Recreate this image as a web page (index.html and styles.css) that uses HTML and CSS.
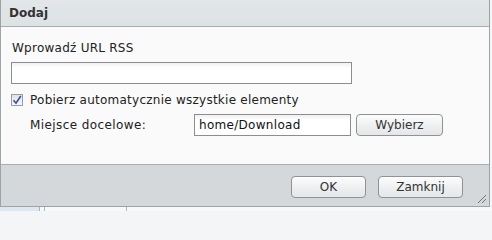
FILE: index.html
```html
<!DOCTYPE html>
<html lang="pl">
<head>
<meta charset="utf-8">
<title>Dodaj</title>
<link rel="stylesheet" href="styles.css">
</head>
<body>
<div class="dialog">
  <div class="titlebar">Dodaj</div>
  <div class="content">
    <div class="label">Wprowadź URL RSS</div>
    <div class="field url-field"></div>
    <div class="check-row">
      <span class="checkbox">
        <svg width="10" height="10" viewBox="0 0 10 10"><path d="M1.5 5.2 L4 8.2 L8.8 1" fill="none" stroke="#3c4f9c" stroke-width="1.6"/></svg>
      </span>
      <span class="check-label">Pobierz automatycznie wszystkie elementy</span>
    </div>
    <div class="dest-row">
      <span class="dest-label">Miejsce docelowe:</span>
      <div class="field dest-field">home/Download</div>
      <div class="btn btn-choose">Wybierz</div>
    </div>
  </div>
  <div class="footer">
    <div class="btn btn-ok">OK</div>
    <div class="btn btn-close">Zamknij</div>
    <svg class="grip" width="10" height="10" viewBox="0 0 10 10">
      <path d="M1 9 L9 1 M5 9 L9 5" stroke="#6f7478" stroke-width="1"/>
    </svg>
  </div>
</div>
<div class="behind">
  <div class="b-side"></div>
  <div class="b-col1"></div>
  <div class="b-col2"></div>
</div>
</body>
</html>
```
FILE: styles.css
```css
html {
  height: 211px;
  overflow: hidden;
}
html, body {
  margin: 0;
  padding: 0;
  background: #f3f5f7;
}
body {
  width: 492px;
  height: 211px;
  overflow: hidden;
  font-family: "DejaVu Sans", Verdana, sans-serif;
  font-size: 12px;
  color: #222;
}
.dialog {
  width: 490px;
  box-sizing: border-box;
  border: 1px solid #9ea3a7;
  border-top: none;
  position: relative;
}
.titlebar {
  height: 26px;
  line-height: 26px;
  padding-left: 8px;
  font-weight: bold;
  font-size: 12px;
  color: #333;
  background: linear-gradient(#e2e6e9, #dde2e5);
  border-bottom: 1px solid #a9adb0;
}
.content {
  box-sizing: border-box;
  height: 138px;
  padding: 14px 10px 0 10px;
  background: #fafafa;
  border-bottom: 1px solid #a9adb0;
}
.label {
  line-height: 14px;
  padding-left: 1px;
  letter-spacing: 0.25px;
}
.field {
  box-sizing: border-box;
  height: 22px;
  border: 1px solid #8d8d8d;
  background: linear-gradient(#f0f0f0, #ffffff 5px, #ffffff);
  line-height: 20px;
  padding-left: 4px;
  color: #111;
  letter-spacing: 0.3px;
}
.url-field {
  width: 341px;
  margin-top: 7px;
}
.check-row {
  display: flex;
  align-items: center;
  margin-top: 9px;
  height: 14px;
}
.checkbox {
  box-sizing: border-box;
  width: 12px;
  height: 12px;
  border: 1px solid #9a9da2;
  background: linear-gradient(#dfe2e6, #f6f7f8);
  display: flex;
  align-items: center;
  justify-content: center;
}
.check-label {
  margin-left: 7px;
  line-height: 14px;
  letter-spacing: 0.25px;
}
.dest-row {
  display: flex;
  align-items: center;
  margin-top: 7px;
  padding-left: 19px;
}
.dest-label {
  width: 164px;
  line-height: 14px;
  letter-spacing: 0.4px;
}
.dest-field {
  width: 157px;
}
.btn {
  box-sizing: border-box;
  height: 22px;
  border: 1px solid #8f9396;
  border-radius: 4px;
  background: linear-gradient(#fdfdfd, #eceeef 60%, #e4e6e8);
  color: #333;
  text-align: center;
  line-height: 20px;
}
.btn-choose {
  width: 87px;
  margin-left: 5px;
}
.footer {
  height: 41px;
  box-sizing: border-box;
  padding: 11px 26px 0 0;
  background: #d4d8db;
  display: flex;
  justify-content: flex-end;
  align-items: flex-start;
  position: relative;
}
.btn-ok {
  width: 75px;
}
.btn-close {
  width: 85px;
  margin-left: 12px;
}
.grip {
  position: absolute;
  right: 2px;
  bottom: 2px;
}
.behind {
  height: 4px;
  display: flex;
  background: #f7f8f9;
}
.b-side {
  width: 39px;
  background: #dde7f2;
  border-right: 1px solid #a9b0b8;
}
.b-col1 {
  width: 4px;
  border-right: 1px solid #b4b8bc;
}
.b-col2 {
  width: 81px;
  border-right: 1px solid #b4b8bc;
}
```
